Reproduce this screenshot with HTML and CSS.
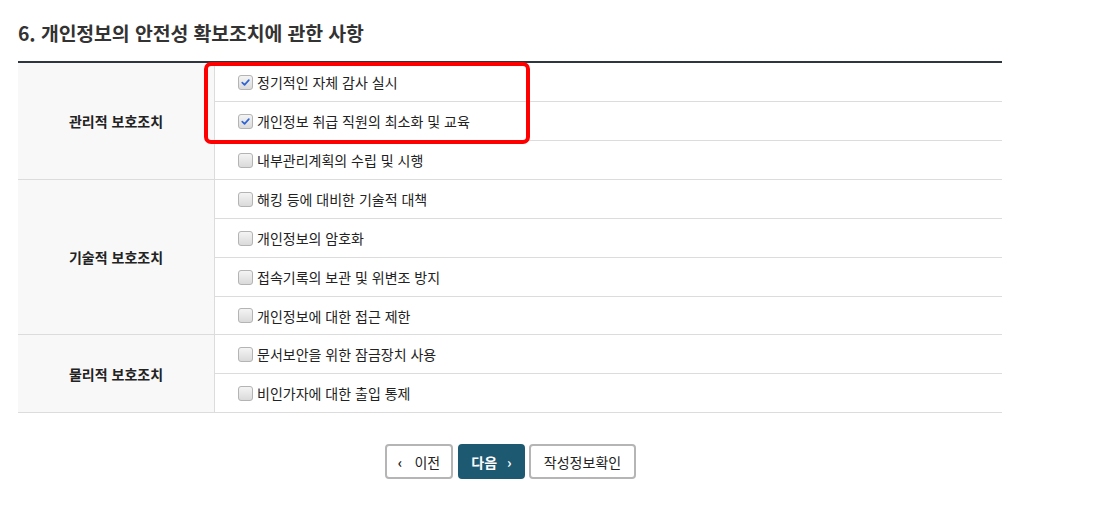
FILE: index.html
```html
<!DOCTYPE html>
<html lang="ko">
<head>
<meta charset="utf-8">
<title>개인정보의 안전성 확보조치</title>
<link rel="stylesheet" href="styles.css">
</head>
<body>
<div class="page">
  <h2 class="title">6. 개인정보의 안전성 확보조치에 관한 사항</h2>
  <div class="table-wrap">
    <table class="measures">
      <tbody>
        <tr>
          <th rowspan="3">관리적 보호조치</th>
          <td><label class="opt"><span class="cb checked"><svg viewBox="0 0 14 14"><path d="M3.5 7.2 L6 9.6 L10.6 4.4" /></svg></span>정기적인 자체 감사 실시</label></td>
        </tr>
        <tr>
          <td><label class="opt"><span class="cb checked"><svg viewBox="0 0 14 14"><path d="M3.5 7.2 L6 9.6 L10.6 4.4" /></svg></span>개인정보 취급 직원의 최소화 및 교육</label></td>
        </tr>
        <tr>
          <td><label class="opt"><span class="cb"></span>내부관리계획의 수립 및 시행</label></td>
        </tr>
        <tr>
          <th rowspan="4">기술적 보호조치</th>
          <td><label class="opt"><span class="cb"></span>해킹 등에 대비한 기술적 대책</label></td>
        </tr>
        <tr>
          <td><label class="opt"><span class="cb"></span>개인정보의 암호화</label></td>
        </tr>
        <tr>
          <td><label class="opt"><span class="cb"></span>접속기록의 보관 및 위변조 방지</label></td>
        </tr>
        <tr>
          <td class="short"><label class="opt"><span class="cb"></span>개인정보에 대한 접근 제한</label></td>
        </tr>
        <tr>
          <th rowspan="2">물리적 보호조치</th>
          <td><label class="opt"><span class="cb"></span>문서보안을 위한 잠금장치 사용</label></td>
        </tr>
        <tr>
          <td><label class="opt"><span class="cb"></span>비인가자에 대한 출입 통제</label></td>
        </tr>
      </tbody>
    </table>
    <div class="highlight"></div>
  </div>
  <div class="actions">
    <button class="btn prev"><span class="arr">‹</span>이전</button>
    <button class="btn primary">다음<span class="arr right">›</span></button>
    <button class="btn wide">작성정보확인</button>
  </div>
</div>
</body>
</html>
```

FILE: styles.css
```css
html, body {
  margin: 0;
  padding: 0;
  background: #fff;
}
body {
  font-family: "Noto Sans CJK KR", "Noto Sans", sans-serif;
  color: #222;
}
.page {
  width: 984px;
  padding: 19px 18px 0 18px;
}
.title {
  margin: 0;
  font-size: 19.4px;
  line-height: 28px;
  font-weight: 700;
  color: #333;
  letter-spacing: -0.1px;
}
.table-wrap {
  position: relative;
  margin-top: 14px;
}
.measures {
  width: 100%;
  border-collapse: collapse;
  border-top: 2px solid #2e3640;
  font-size: 14px;
}
.measures th {
  width: 196px;
  background: #f8f8f8;
  border-right: 1px solid #dcdcdc;
  border-bottom: 1px solid #dcdcdc;
  font-weight: 700;
  color: #222;
  text-align: center;
  padding: 0;
}
.measures td {
  height: 38px;
  padding: 0 0 0 23px;
  border-bottom: 1px solid #dcdcdc;
  color: #222;
}
.measures td.short {
  height: 37px;
}
.opt {
  display: flex;
  align-items: center;
  gap: 4px;
  line-height: 18px;
}
.cb {
  box-sizing: border-box;
  width: 15px;
  height: 15px;
  border: 1px solid #b4b4b4;
  border-radius: 3px;
  background: linear-gradient(#f4f4f4, #dadada);
  display: inline-flex;
  align-items: center;
  justify-content: center;
  flex: none;
}
.cb svg {
  width: 13px;
  height: 13px;
}
.cb svg path {
  fill: none;
  stroke: #2f64d4;
  stroke-width: 1.8;
  stroke-linecap: round;
  stroke-linejoin: round;
}
.highlight {
  position: absolute;
  left: 186px;
  top: 1px;
  width: 326px;
  height: 82px;
  box-sizing: border-box;
  border: 4px solid #ff0000;
  border-radius: 7px;
  pointer-events: none;
}
.actions {
  display: flex;
  justify-content: center;
  gap: 4px;
  margin-top: 31px;
  padding-left: 1px;
}
.btn {
  box-sizing: border-box;
  height: 35px;
  padding: 0;
  background: #fff;
  border: 2px solid #b5b5b5;
  border-radius: 4px;
  font-family: "Noto Sans CJK KR", "Noto Sans", sans-serif;
  font-size: 14px;
  color: #222;
  display: inline-flex;
  align-items: center;
  justify-content: center;
}
.btn.prev {
  width: 68px;
  margin-right: 1px;
}
.btn.primary {
  width: 67px;
  background: #1d5a72;
  border-color: #1d5a72;
  color: #fff;
  font-weight: 700;
}
.btn.wide {
  width: 107px;
}
.arr {
  font-size: 14px;
  font-weight: 700;
  margin-right: 12px;
  line-height: 1;
}
.arr.right {
  margin-right: 0;
  margin-left: 10px;
}
```
